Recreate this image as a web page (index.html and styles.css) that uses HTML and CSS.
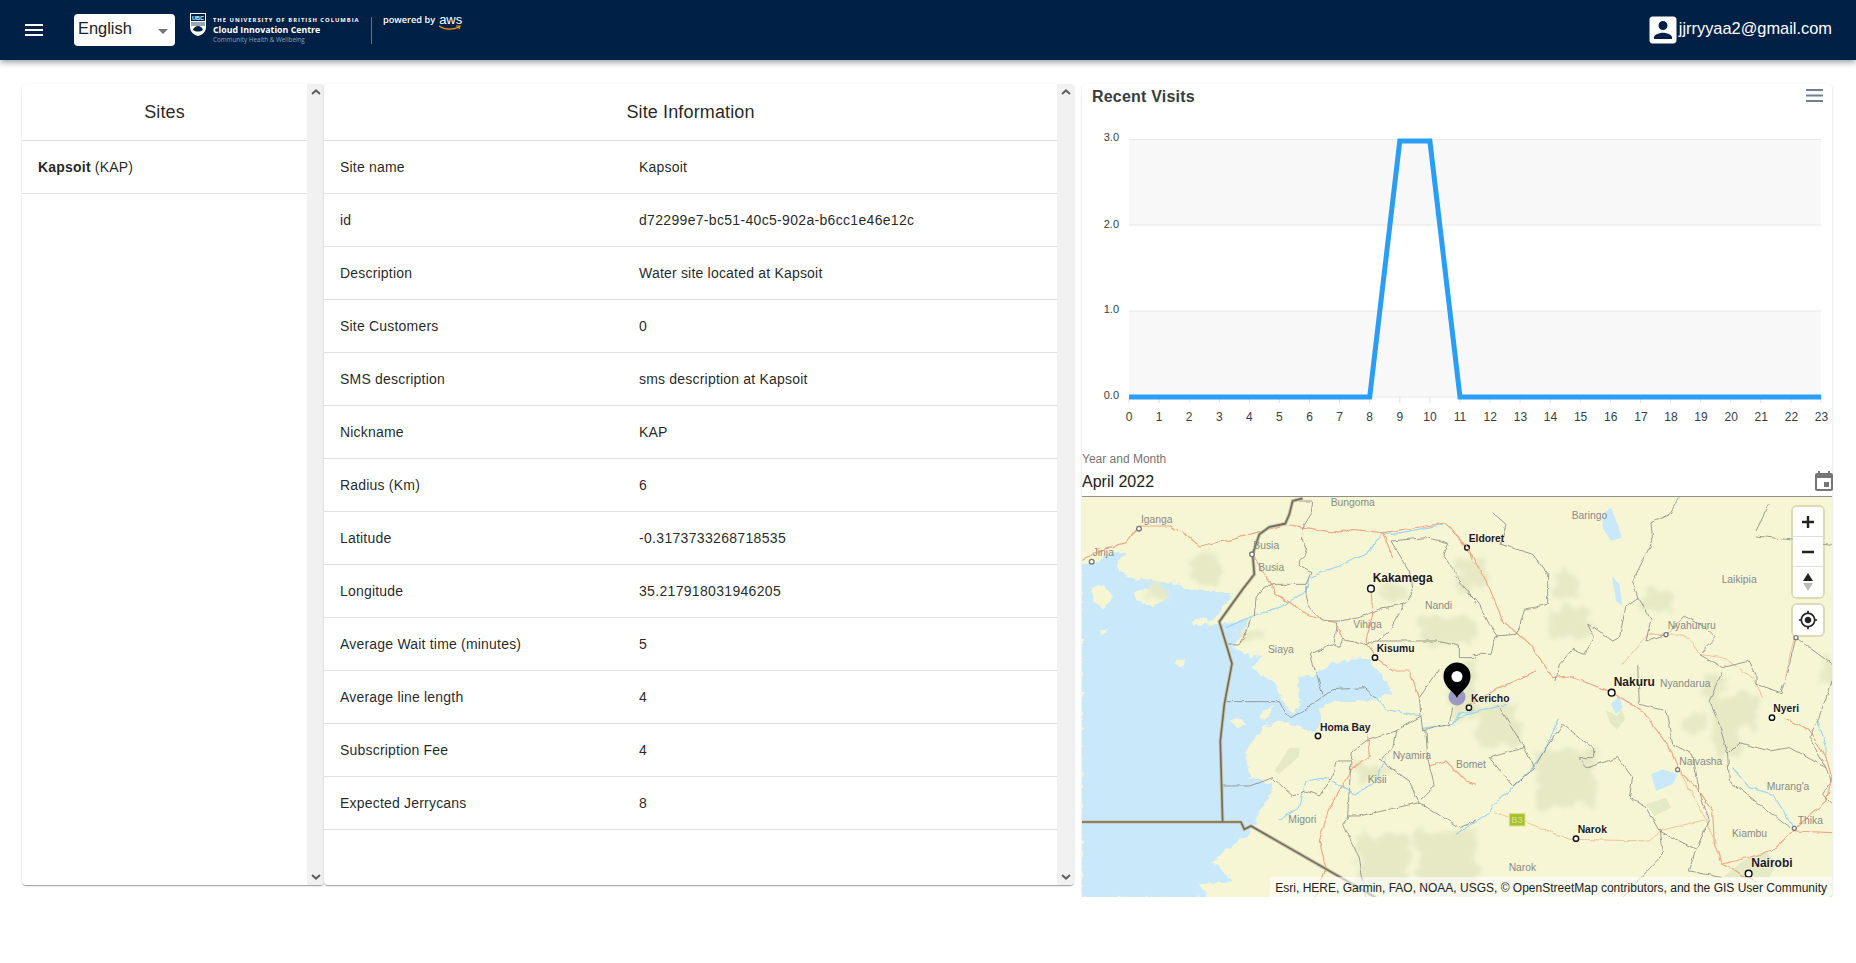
FILE: index.html
```html
<!DOCTYPE html>
<html lang="en">

<head>
    <meta charset="UTF-8" />
    <meta name="viewport" content="width=device-width, initial-scale=1.0">
    <title>Sites</title>
    <link rel="stylesheet" href="styles.css">
</head>

<body>
    <header class="topbar">
        <svg class="menu-icon" viewBox="0 0 18 12"><path d="M0 0h18v2H0zM0 5h18v2H0zM0 10h18v2H0z" /></svg>
        <div class="lang-select">
            <span>English</span>
            <i class="lang-arrow"></i>
        </div>
        <div class="brand">
            <svg class="shield" viewBox="0 0 16 23">
                <path d="M0 0h16v14c0 5-4 8-8 9-4-1-8-4-8-9z" fill="#fff" />
                <rect x="1" y="1" width="14" height="7" fill="#002145" />
                <text x="8" y="7" class="shield-text">UBC</text>
                <path d="M1 10h14M1 12h14" stroke="#002145" stroke-width=".8" />
                <path d="M3 17c1-3 3-4 5-4s4 1 5 4c-3 2-7 2-10 0z" fill="#002145" />
            </svg>
            <div class="brand-text">
                <div class="brand-uni">THE UNIVERSITY OF BRITISH COLUMBIA</div>
                <div class="brand-centre">Cloud Innovation Centre</div>
                <div class="brand-sub">Community Health &amp; Wellbeing</div>
            </div>
            <div class="brand-divider"></div>
            <div class="powered">
                <span>powered by</span>
                <span class="aws">aws
                    <svg class="aws-smile" viewBox="0 0 22 5"><path d="M0 1c6 4 14 4 20 1M17 1l4 0-1 3" fill="none" stroke="#f90" stroke-width="1.2" /></svg>
                </span>
            </div>
        </div>
        <div class="account">
            <svg class="account-icon" viewBox="0 0 24 24"><path d="M3 5v14c0 1.1.89 2 2 2h14c1.1 0 2-.9 2-2V5c0-1.1-.9-2-2-2H5c-1.11 0-2 .9-2 2zm12 4c0 1.66-1.34 3-3 3s-3-1.34-3-3 1.34-3 3-3 3 1.34 3 3zm-9 8c0-2 4-3.1 6-3.1s6 1.1 6 3.1v1H6v-1z" /></svg>
            <span class="account-mail">jjrryyaa2@gmail.com</span>
        </div>
    </header>

    <main class="content">
        <section class="panel panel-sites">
            <div class="panel-body">
                <div class="panel-title">Sites</div>
                <div class="table-row site-row"><b>Kapsoit</b>&nbsp;(KAP)</div>
            </div>
            <div class="scrollbar">
                <svg viewBox="0 0 10 6"><path d="M1 5l4-3.6L9 5" /></svg>
                <svg viewBox="0 0 10 6"><path d="M1 1l4 3.6L9 1" /></svg>
            </div>
        </section>

        <section class="panel panel-info">
            <div class="panel-body">
                <div class="panel-title">Site Information</div>
                <table class="info-table">
                    <tr><td>Site name</td><td>Kapsoit</td></tr>
                    <tr><td>id</td><td class="num">d72299e7-bc51-40c5-902a-b6cc1e46e12c</td></tr>
                    <tr><td>Description</td><td>Water site located at Kapsoit</td></tr>
                    <tr><td>Site Customers</td><td>0</td></tr>
                    <tr><td>SMS description</td><td>sms description at Kapsoit</td></tr>
                    <tr><td>Nickname</td><td>KAP</td></tr>
                    <tr><td>Radius (Km)</td><td>6</td></tr>
                    <tr><td>Latitude</td><td class="num">-0.3173733268718535</td></tr>
                    <tr><td>Longitude</td><td class="num">35.217918031946205</td></tr>
                    <tr><td>Average Wait time (minutes)</td><td>5</td></tr>
                    <tr><td>Average line length</td><td>4</td></tr>
                    <tr><td>Subscription Fee</td><td>4</td></tr>
                    <tr><td>Expected Jerrycans</td><td>8</td></tr>
                </table>
            </div>
            <div class="scrollbar">
                <svg viewBox="0 0 10 6"><path d="M1 5l4-3.6L9 5" /></svg>
                <svg viewBox="0 0 10 6"><path d="M1 1l4 3.6L9 1" /></svg>
            </div>
        </section>

        <section class="panel panel-right">
            <svg class="chart" viewBox="0 0 750 350">
                <text x="10" y="18" class="chart-title">Recent Visits</text>
                <path d="M724 6h17M724 11.500h17M724 17h17" stroke="#6e8192" stroke-width="2" />

                <rect x="47" y="55.500" width="692" height="85.500" fill="#f8f8f8" />
                <rect x="47" y="227" width="692" height="86" fill="#f8f8f8" />
                <path d="M47 55.500h692M47 141h692M47 227h692M47 313h692" stroke="#e8e8e8" stroke-width="1" />

                <path class="chart-ticks" d="M47 313v6M77.100 313v6M107.200 313v6M137.300 313v6M167.300 313v6M197.400 313v6M227.500 313v6M257.600 313v6M287.700 313v6M317.800 313v6M347.900 313v6M378 313v6M408 313v6M438.100 313v6M468.200 313v6M498.300 313v6M528.400 313v6M558.500 313v6M588.600 313v6M618.700 313v6M648.700 313v6M678.800 313v6M708.900 313v6M739 313v6" />

                <g class="y-labels">
                    <text x="37" y="57">3.0</text>
                    <text x="37" y="144">2.0</text>
                    <text x="37" y="229">1.0</text>
                    <text x="37" y="314.500">0.0</text>
                </g>
                <g class="x-labels">
                    <text x="47" y="337">0</text>
                    <text x="77.100" y="337">1</text>
                    <text x="107.200" y="337">2</text>
                    <text x="137.300" y="337">3</text>
                    <text x="167.300" y="337">4</text>
                    <text x="197.400" y="337">5</text>
                    <text x="227.500" y="337">6</text>
                    <text x="257.600" y="337">7</text>
                    <text x="287.700" y="337">8</text>
                    <text x="317.800" y="337">9</text>
                    <text x="347.900" y="337">10</text>
                    <text x="378" y="337">11</text>
                    <text x="408.300" y="337">12</text>
                    <text x="438.400" y="337">13</text>
                    <text x="468.500" y="337">14</text>
                    <text x="498.600" y="337">15</text>
                    <text x="528.700" y="337">16</text>
                    <text x="558.900" y="337">17</text>
                    <text x="589" y="337">18</text>
                    <text x="619" y="337">19</text>
                    <text x="649.200" y="337">20</text>
                    <text x="679.300" y="337">21</text>
                    <text x="709.400" y="337">22</text>
                    <text x="739.500" y="337">23</text>
                </g>
                <path class="chart-line" d="M47 313H287.700L317.800 57H347.900L378 313H739" />
            </svg>

            <div class="date-field">
                <label class="date-label">Year and Month</label>
                <div class="date-row">
                    <span>April 2022</span>
                    <svg class="date-icon" viewBox="0 0 24 24"><path d="M17 12h-5v5h5v-5zM16 1v2H8V1H6v2H5c-1.11 0-1.99.9-1.99 2L3 19c0 1.1.89 2 2 2h14c1.1 0 2-.9 2-2V5c0-1.1-.9-2-2-2h-1V1h-2zm3 18H5V8h14v11z" /></svg>
                </div>
            </div>

            <div class="map">
                <svg class="map-canvas" viewBox="0 0 750 400">
                    <defs>
                        <filter id="soft" x="-10%" y="-10%" width="120%" height="120%">
                            <feTurbulence type="fractalNoise" baseFrequency="0.025" numOctaves="3" seed="4" />
                            <feDisplacementMap in="SourceGraphic" scale="70" xChannelSelector="R" yChannelSelector="G" />
                            <feGaussianBlur stdDeviation="7" />
                        </filter>
                        <filter id="rough" x="-5%" y="-5%" width="110%" height="110%">
                            <feTurbulence type="fractalNoise" baseFrequency="0.05" numOctaves="3" seed="9" />
                            <feDisplacementMap in="SourceGraphic" scale="22" xChannelSelector="R" yChannelSelector="G" />
                        </filter>
                        <filter id="wiggle" x="-5%" y="-5%" width="110%" height="110%">
                            <feTurbulence type="fractalNoise" baseFrequency="0.04" numOctaves="2" seed="2" />
                            <feDisplacementMap in="SourceGraphic" scale="12" xChannelSelector="R" yChannelSelector="G" />
                        </filter>
                    </defs>
                    <rect width="750" height="400" fill="#f6f6d5" />

                    <g transform="translate(-6,-6) scale(.3333)">
                        <g filter="url(#rough)">
                            <path class="water" d="M18 215L60 215 100 190 150 185 125 210 130 240 170 265 215 265 280 275 330 290 400 300 470 310 430 360 400 400 450 400 520 380 490 440 470 470 530 500 560 490 530 530 600 580 620 630 650 670 670 640 665 560 720 550 760 520 840 500 880 505 950 600 900 625 860 630 780 630 725 650 735 690 718 730 700 720 650 700 600 690 570 710 590 680 520 760 510 800 520 860 590 880 575 930 550 960 540 1000 520 1030 470 1060 410 1110 470 1170 370 1180 400 1220 18 1220z" />
                            <path class="land" d="M45 290l40-5 25 35-30 30-30-25zM165 310l60-20 50 20-15 25-45 10zM345 390l35-10 25 20-40 5zM70 415l25 0-10 20zM295 515l30-10 0 20-10 5zM455 690l30-10 30 20-20 15zM550 670l40-25-5 30-25 10z" />
                        </g>
                        <g class="patch" filter="url(#soft)">
                            <path d="M350 200l60-20 40 60-50 50-50-30zM210 270h60v50h-60zM920 280h80v50h-80zM1030 380h170v80h-170zM500 410h70v40h-70zM1020 1010h180v210h-180zM840 1030h160v170h-160zM840 820h90v50h-90zM1120 520h80v160h-80z" />
                        </g>
                        <path class="patch-solid" d="M640 770h32l-4 28-60 52-12-10z" />

                        <g filter="url(#wiggle)">
                            <path class="river" d="M450 410L530 375 620 345 690 300 700 260 800 220 870 190 920 125 950 130 1100 100M1040 715L1130 700 1150 670 1200 660M605 990L670 950 690 870 750 860 840 910 900 870 930 800M900 620L930 655 1010 670 1035 675" />
                            <path class="road" d="M18 205L100 170 150 155 190 105 280 105 330 130 370 165 470 145 540 125 630 100 780 125 830 115 920 125 1050 105 1110 95 1170 170 1200 230M530 190L600 310 700 375 780 395 800 445M900 500L950 540 1000 540 1030 620M885 290L890 370 870 450 900 500M875 730L880 800 830 830 760 950 730 1050 750 1130 720 1220M1060 825L1110 810 1170 870 1200 880M920 125L950 200" />
                            <path class="border" d="M650 30L710 30 705 70 680 110 680 150 695 185 670 210 670 225 705 245 690 280 600 280 565 285 540 320 535 375M520 385L505 440 488 462 455 462M445 632L610 632 630 670 645 680 680 660 770 596 865 590 900 620M703 490L740 610M703 490L770 458 790 470 800 445 860 460 900 450 1080 450 1150 465 1150 500 1200 500M1035 675L1040 720 1120 700 1130 650M440 885L525 885 590 860 650 915 690 900 730 915 770 860 780 810 825 810 830 780 870 750 960 720 1035 675M825 810L815 975 850 975 1030 935 1150 1010 1200 990M800 1000L850 1100 870 1220M800 1000L820 975M1030 935L1000 870 930 820 910 810 950 770 960 720M1050 720L1055 800 1075 885 1035 925M945 150L1050 140 1115 155 1100 190 1200 335M945 150L1000 240 1010 310 985 340 920 350 850 380 790 390 740 390 700 350 690 310 690 285M785 395L775 455M985 340L940 420 905 450M1090 535L1030 620 1035 675" />
                        </g>
                        <path class="country-halo" d="M680 22L650 30 640 70 628 98 580 108 550 130 530 190 535 250 500 295 430 392 468 518 445 640 433 750 440 995M18 993L495 993 505 1015 525 1005 900 1220" />
                        <path class="country" d="M680 22L650 30 640 70 628 98 580 108 550 130 530 190 535 250 500 295 430 392 468 518 445 640 433 750 440 995M18 993L495 993 505 1015 525 1005 900 1220" />

                        <g class="city">
                            <circle cx="885" cy="293" r="10" />
                            <circle cx="897" cy="500" r="8" />
                            <circle cx="726" cy="735" r="8" />
                            <circle cx="1179" cy="650" r="8" />
                            <circle cx="1173" cy="170" r="7" />
                        </g>
                        <g class="city-minor">
                            <circle cx="189" cy="113" r="7" />
                            <circle cx="47" cy="212" r="7" />
                            <circle cx="528" cy="190" r="7" />
                        </g>

                        <g class="label">
                            <text x="764" y="45">Bungoma</text>
                            <text x="195" y="97">Iganga</text>
                            <text x="50" y="195">Jinja</text>
                            <text x="532" y="175">Busia</text>
                            <text x="547" y="240">Busia</text>
                            <text x="1047" y="353">Nandi</text>
                            <text x="832" y="411">Vihiga</text>
                            <text x="576" y="486">Siaya</text>
                            <text x="950" y="805">Nyamira</text>
                            <text x="875" y="876">Kisii</text>
                            <text x="637" y="996">Migori</text>
                        </g>
                        <g class="label-major">
                            <text x="890" y="274">Kakamega</text>
                            <text x="902" y="484" class="label-small">Kisumu</text>
                            <text x="732" y="719" class="label-small">Homa Bay</text>
                        </g>
                    </g>

                    <g transform="translate(374,-6) scale(.3333)">
                        <path class="water" d="M440 70L465 50 485 100 497 140 465 150 440 110zM468 255L490 280 500 345 480 330zM465 640L490 615 500 650 480 670zM585 850L620 835 665 850 650 880 600 900z" />
                        <g class="patch" filter="url(#soft)">
                            <path d="M300 240h60v90h-60zM280 350h120v90h-120zM60 640h130v130h-130zM240 780h170v170h-170zM740 540h60v100h-60zM770 610h130v100h-130zM790 700h60v100h-60zM560 300h100v60h-100zM0 1040h30v120h-30zM690 670h60v50h-60zM0 200h90v90h-90zM1100 500h28v80h-28z" />
                        </g>
                        <path class="patch-solid" d="M570 940l60-20 15 30-50 25zM450 660l12 35 20 20 25-30-10-30-15 20-15-10zM800 1160l60-50 70-30 30 40-20 40z" />

                        <g filter="url(#wiggle)">
                            <path class="river" d="M0 680L150 640M310 680L270 770 230 830 115 940 100 965 0 1030M830 830L880 890 950 910 1015 1010M1085 690L1110 760 1110 810" />
                            <path class="road" d="M0 130L40 180 100 290 140 390 175 420 230 470 290 560 340 555 470 605 560 660 640 770 670 840 730 900 770 960 775 1060 800 1120 930 1190M985 680L1060 720 1110 800 1128 860 1110 930 1020 1010 950 1080 800 1120M1015 1020L1128 1025M240 540L130 590 40 640" />
                            <path class="road-thin" d="M575 430L500 520M575 430L650 430 700 440 730 490 800 500 890 560 920 620M985 560L1015 440M670 840L750 985 780 1060M115 965L200 990 340 1045 580 1050 610 1020 750 985" />
                            <path class="border" d="M110 65L150 100 135 160 230 190 275 250 275 340 205 355 190 410 180 430 120 435 105 490 50 490M0 260L70 340 100 400 125 435M670 20L640 70 585 95 590 150 530 270 545 320 585 385 570 450M545 320L510 345 490 440 470 450 415 410 395 400 415 440 385 490 350 475 310 520 300 570M125 640L205 770 235 830 170 885 100 800 205 770M235 830L270 770 320 700 410 770 410 800 370 800 395 830 485 800 530 860 520 920 570 950 610 1020 720 1075M610 1020L620 1090 500 1220M570 450L630 430 685 375 750 410 780 440 730 490 800 530 880 510 900 550 900 580 975 605 1000 520 1020 440M545 520L550 640 630 660 650 760 710 790 730 900 760 990 720 1075 700 1140 800 1160M800 540L760 630 790 700 815 790 820 870 1000 1010M815 790L850 755 940 780 1000 770 1110 830 1125 870 1100 910 1128 940M1020 440L1128 520M1128 570L1085 690 1060 740 1110 830M900 120L940 40M900 135L1128 160" />
                        </g>

                        <rect class="shield-b3" x="160" y="968" width="47" height="37" />
                        <text x="183" y="997" class="shield-b3-text">B3</text>

                        <g class="city">
                            <circle cx="467" cy="605" r="10" />
                            <circle cx="948" cy="680" r="8" />
                            <circle cx="360" cy="1043" r="8" />
                            <circle cx="878" cy="1148" r="10" />
                        </g>
                        <g class="city-minor">
                            <circle cx="665" cy="836" r="6" />
                            <circle cx="630" cy="431" r="6" />
                            <circle cx="1015" cy="1012" r="6" />
                            <circle cx="1020" cy="440" r="6" />
                        </g>

                        <g class="label">
                            <text x="347" y="85">Baringo</text>
                            <text x="797" y="277">Laikipia</text>
                            <text x="635" y="415">Nyahururu</text>
                            <text x="612" y="589">Nyandarua</text>
                            <text x="670" y="822">Naivasha</text>
                            <text x="932" y="896">Murang'a</text>
                            <text x="1025" y="998">Thika</text>
                            <text x="828" y="1037">Kiambu</text>
                            <text x="158" y="1139">Narok</text>
                            <text x="0" y="831">Bomet</text>
                        </g>
                        <g class="label-major">
                            <text x="38" y="153" class="label-small">Eldoret</text>
                            <text x="473" y="586">Nakuru</text>
                            <text x="45" y="632" class="label-small">Kericho</text>
                            <text x="952" y="664" class="label-small">Nyeri</text>
                            <text x="365" y="1026" class="label-small">Narok</text>
                            <text x="886" y="1128">Nairobi</text>
                        </g>
                    </g>

                    <circle cx="375" cy="200" r="8.500" fill="#6a62c4" fill-opacity=".6" />
                    <path d="M375 201c-2-6-13.500-10-13.500-22a13.500 13.500 0 0 1 27 0c0 12-11.500 16-13.500 22z" fill="#000" />
                    <circle cx="375" cy="179.500" r="5.500" fill="#fff" />
                </svg>

                <div class="map-controls">
                    <div class="map-buttons">
                        <button class="map-btn"><svg viewBox="0 0 12 12"><path d="M4.800 0h2.400v4.800H12v2.400H7.200V12H4.800V7.200H0V4.800h4.800z" /></svg></button>
                        <button class="map-btn"><svg viewBox="0 0 12 12"><path d="M0 4.800h12v2.400H0z" /></svg></button>
                        <button class="map-btn"><svg viewBox="0 0 12 18"><path d="M6 0l5 8H1z" /><path d="M1 10h10l-5 8z" fill="#bbb" /></svg></button>
                    </div>
                    <div class="map-buttons">
                        <button class="map-btn"><svg class="locate" viewBox="0 0 24 24"><path d="M12 8c-2.210 0-4 1.790-4 4s1.790 4 4 4 4-1.790 4-4-1.790-4-4-4zm8.940 3c-.46-4.170-3.770-7.480-7.940-7.940V1h-2v2.060C6.830 3.520 3.520 6.830 3.060 11H1v2h2.060c.46 4.170 3.770 7.480 7.940 7.940V23h2v-2.060c4.170-.46 7.480-3.770 7.940-7.940H23v-2h-2.060zM12 19c-3.870 0-7-3.130-7-7s3.130-7 7-7 7 3.130 7 7-3.130 7-7 7z" /></svg></button>
                    </div>
                </div>

                <div class="map-attribution">Esri, HERE, Garmin, FAO, NOAA, USGS, © OpenStreetMap contributors, and the GIS User Community</div>
            </div>
        </section>
    </main>
</body>

</html>
```

FILE: styles.css
```css
body {
    font-family: "Liberation Sans", Arial, sans-serif;
    background-color: #fff;
    color: rgba(0, 0, 0, 0.87);
    margin: 0;
    padding: 0;
    overflow: hidden;
}

/* top bar */
.topbar {
    height: 60px;
    background-color: #002145;
    box-shadow: 0 2px 4px -1px rgba(0, 0, 0, 0.2), 0 4px 5px 0 rgba(0, 0, 0, 0.14), 0 1px 10px 0 rgba(0, 0, 0, 0.12);
    display: flex;
    align-items: center;
    padding: 0 24px 0 25px;
    color: #fff;
}

.menu-icon {
    width: 18px;
    height: 12px;
    fill: #fff;
    margin-right: 31px;
}

.lang-select {
    width: 101px;
    height: 32px;
    background: #fff;
    border-radius: 4px;
    box-sizing: border-box;
    padding: 0 0 4px 4px;
    display: flex;
    align-items: center;
    justify-content: space-between;
    color: #212121;
    font-size: 16.400px;
    margin-right: 15px;
}

.lang-arrow {
    width: 0;
    height: 0;
    border-left: 5px solid transparent;
    border-right: 5px solid transparent;
    border-top: 5px solid #757575;
    margin-right: 7px;
    margin-top: 6px;
}

.brand {
    display: flex;
    align-items: center;
}

.shield {
    width: 16px;
    height: 23px;
    margin-right: 7px;
    margin-top: -12px;
}

.shield-text {
    font-size: 5.5px;
    font-weight: bold;
    fill: #fff;
    text-anchor: middle;
}

.brand-text {
    width: 158px;
    font-family: "Open Sans", sans-serif;
    line-height: 1;
}

.brand-uni {
    font-size: 5.8px;
    font-weight: 700;
    letter-spacing: 1px;
    white-space: nowrap;
    margin-top: 1px;
}

.brand-centre {
    font-size: 8.8px;
    font-weight: 700;
    margin-top: 3px;
    white-space: nowrap;
}

.brand-sub {
    font-size: 6.3px;
    color: #8fa0b2;
    margin-top: 2px;
    white-space: nowrap;
}

.brand-divider {
    width: 1px;
    height: 27px;
    background: #5f7488;
    margin-right: 11px;
}

.powered {
    display: flex;
    align-items: flex-start;
    gap: 4px;
    font-family: "Open Sans", sans-serif;
    font-size: 9.2px;
    font-weight: 600;
    margin-top: -21px;
    white-space: nowrap;
}

.aws {
    position: relative;
    font-size: 13px;
    font-weight: normal;
    line-height: 13px;
    font-family: "Liberation Sans", sans-serif;
}

.aws-smile {
    position: absolute;
    left: 0;
    top: 12px;
    width: 22px;
    height: 5px;
}

.account {
    margin-left: auto;
    display: flex;
    align-items: center;
    font-size: 16.400px;
}

.account-icon {
    width: 36px;
    height: 36px;
    fill: #fff;
    margin-right: -2px;
}

.account-mail {
    padding-bottom: 3px;
}

/* panels */
.content {
    display: flex;
    align-items: flex-start;
    padding: 24px 22px 0;
}

.panel {
    background: #fff;
    border-radius: 4px;
    box-shadow: 0 2px 1px -1px rgba(0, 0, 0, 0.2), 0 1px 1px 0 rgba(0, 0, 0, 0.14), 0 1px 3px 0 rgba(0, 0, 0, 0.12);
}

.panel-sites,
.panel-info {
    height: 801px;
    display: flex;
    overflow: hidden;
}

.panel-sites {
    width: 302px;
}

.panel-info {
    width: 750px;
    margin-right: 8px;
}

.panel-right {
    width: 750px;
    height: 813px;
    display: flex;
    flex-direction: column;
}

.panel-body {
    flex: 1;
    min-width: 0;
}

.panel-title {
    height: 56px;
    line-height: 56px;
    text-align: center;
    font-size: 18px;
    letter-spacing: 0.0075em;
    border-bottom: 1px solid #e0e0e0;
}

.table-row {
    height: 52px;
    line-height: 52px;
    padding-left: 16px;
    font-size: 14px;
    letter-spacing: 0.2px;
    border-bottom: 1px solid #e0e0e0;
}

.site-row b {
    font-weight: bold;
}

.scrollbar {
    width: 17px;
    background: #f1f1f1;
    display: flex;
    flex-direction: column;
    justify-content: space-between;
    align-items: center;
    padding: 5px 0;
    box-sizing: border-box;
}

.scrollbar svg {
    width: 10px;
    height: 6px;
    fill: none;
    stroke: #5f5f5f;
    stroke-width: 2;
}

.info-table {
    width: 100%;
    border-collapse: separate;
    border-spacing: 0;
    table-layout: fixed;
    font-size: 14px;
    letter-spacing: 0.2px;
}

.info-table td {
    height: 52px;
    padding: 0 16px;
    border-bottom: 1px solid #e0e0e0;
}

.info-table td:first-child {
    width: 267px;
}

.info-table .num {
    letter-spacing: 0.32px;
}

/* chart */
.chart {
    display: block;
    width: 750px;
    height: 350px;
    font-family: "Liberation Sans", Arial, sans-serif;
}

.chart-title {
    font-size: 16px;
    font-weight: bold;
    letter-spacing: 0.2px;
    fill: #373d3f;
}

.chart-ticks {
    stroke: #e0e0e0;
    fill: none;
}

.y-labels text {
    font-size: 11px;
    fill: #373d3f;
    text-anchor: end;
}

.x-labels text {
    font-size: 12px;
    fill: #373d3f;
    text-anchor: middle;
}

.chart-line {
    fill: none;
    stroke: #2a9df4;
    stroke-width: 5;
}

/* date picker */
.date-field {
    height: 63px;
    box-sizing: border-box;
    padding-top: 18px;
    border-bottom: 1px solid #8f8f8f;
}

.date-label {
    display: block;
    font-size: 12px;
    line-height: 14px;
    color: #757575;
}

.date-row {
    display: flex;
    justify-content: space-between;
    align-items: center;
    font-size: 16px;
    height: 24px;
    margin-top: 4px;
    color: #212121;
}

.date-icon {
    width: 24px;
    height: 24px;
    fill: #757575;
    margin-right: -4px;
}

/* map */
.map {
    position: relative;
    height: 400px;
    overflow: hidden;
    border-radius: 0 0 4px 4px;
}

.map-canvas {
    display: block;
    width: 750px;
    height: 400px;
    font-family: "Liberation Sans", Arial, sans-serif;
}

.water {
    fill: #c9e9fa;
}

.land {
    fill: #f6f6d5;
}

.patch {
    fill: #e6e9c4;
}

.patch-solid {
    fill: #e6e9c6;
}

.river {
    fill: none;
    stroke: #9fd5ef;
    stroke-width: 3.5;
}

.road {
    fill: none;
    stroke: #eca987;
    stroke-width: 3.5;
}

.road-thin {
    fill: none;
    stroke: #f0c3a0;
    stroke-width: 3;
}

.border {
    fill: none;
    stroke: #8a8a82;
    stroke-width: 2.500;
}

.country-halo {
    fill: none;
    stroke: #cdc7a8;
    stroke-width: 11;
}

.country {
    fill: none;
    stroke: #6f6c60;
    stroke-width: 5;
}

.city circle {
    fill: #fff;
    stroke: #111;
    stroke-width: 4.500;
}

.city-minor circle {
    fill: #fff;
    stroke: #777;
    stroke-width: 4;
}

.label text {
    font-size: 31px;
    fill: #8a8a88;
}

.label-major text {
    font-size: 36px;
    font-weight: bold;
    fill: #1a1a1a;
    stroke: rgba(255, 255, 255, 0.5);
    stroke-width: 4;
    paint-order: stroke;
}

.label-major .label-small {
    font-size: 31px;
}

.shield-b3 {
    fill: #a5c02c;
    stroke: #d9df8f;
    stroke-width: 3;
}

.shield-b3-text {
    font-size: 28px;
    fill: #dbe58a;
    text-anchor: middle;
}

.map-controls {
    position: absolute;
    top: 10px;
    right: 9px;
    display: flex;
    flex-direction: column;
    gap: 8px;
}

.map-buttons {
    display: flex;
    flex-direction: column;
    background: #fff;
    border-radius: 4px;
    box-shadow: 0 0 0 2px rgba(180, 180, 140, 0.4);
    overflow: hidden;
}

.map-btn {
    width: 30px;
    height: 30px;
    padding: 0;
    border: none;
    border-bottom: 1px solid #ddd;
    background: #fff;
    display: flex;
    align-items: center;
    justify-content: center;
}

.map-btn:last-child {
    border-bottom: none;
}

.map-btn svg {
    width: 12px;
    height: 12px;
    fill: #222;
}

.map-btn:nth-child(3) svg {
    height: 18px;
}

.map-btn .locate {
    width: 20px;
    height: 20px;
}

.map-attribution {
    position: absolute;
    right: 0;
    bottom: 0;
    left: 188px;
    height: 20px;
    line-height: 23px;
    background: rgba(255, 255, 255, 0.6);
    font-size: 12px;
    color: #222;
    text-align: right;
    padding-right: 5px;
    white-space: nowrap;
}
```
